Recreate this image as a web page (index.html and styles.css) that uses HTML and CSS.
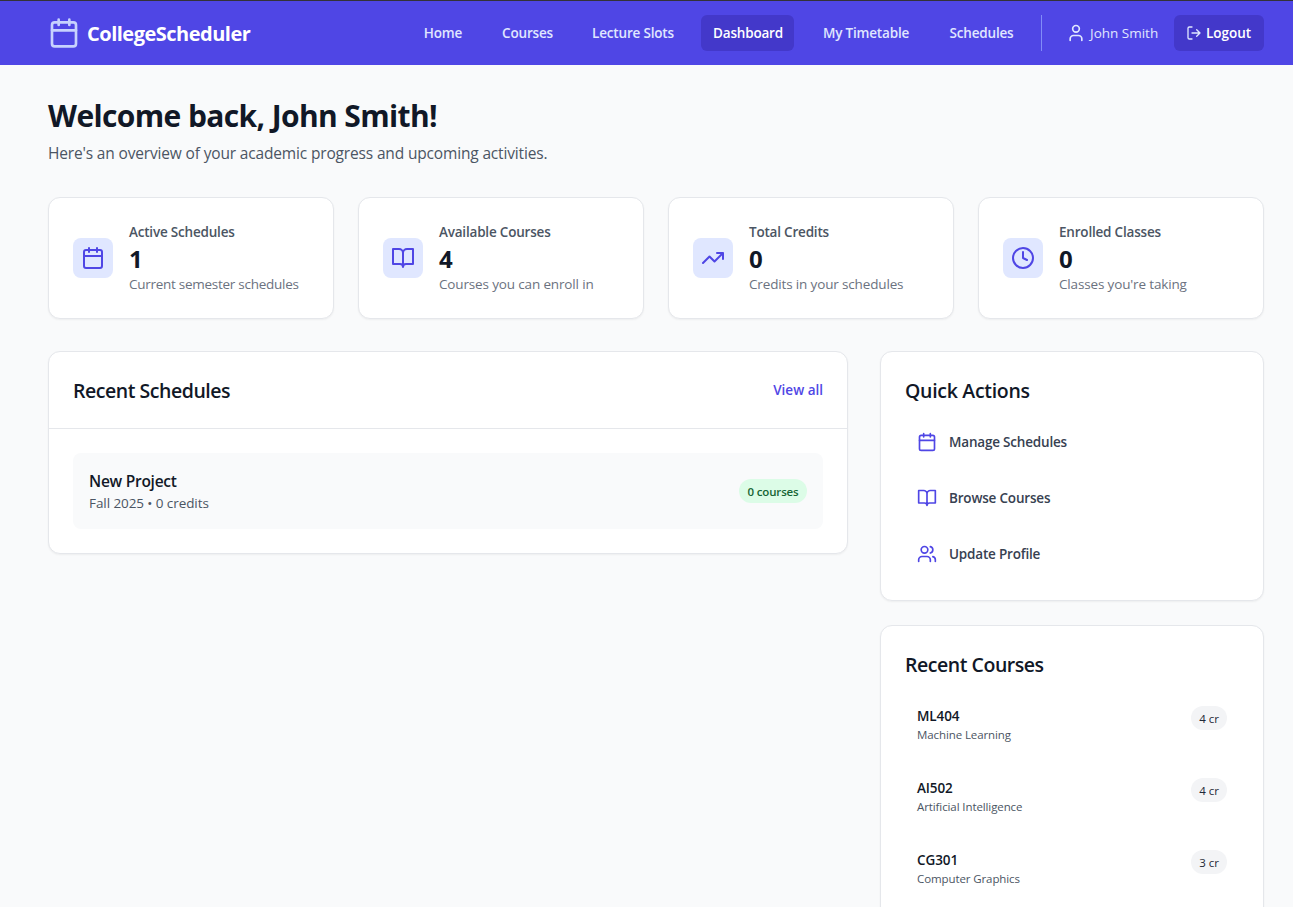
FILE: index.html
```html
<!DOCTYPE html>
<html lang="en">
<head>
<meta charset="utf-8">
<title>CollegeScheduler</title>
<link rel="stylesheet" href="styles.css">
</head>
<body>
<svg class="sprite" aria-hidden="true">
  <symbol id="calendar" viewBox="0 0 24 24"><path d="M8 2v4M16 2v4M3 10h18"/><rect x="3" y="4" width="18" height="18" rx="2"/></symbol>
  <symbol id="book" viewBox="0 0 24 24"><path d="M2 3h6a4 4 0 0 1 4 4v14a3 3 0 0 0-3-3H2zM22 3h-6a4 4 0 0 0-4 4v14a3 3 0 0 1 3-3h7z"/></symbol>
  <symbol id="trend" viewBox="0 0 24 24"><path d="M22 7l-8.5 8.5-5-5L2 17M16 7h6v6"/></symbol>
  <symbol id="clock" viewBox="0 0 24 24"><circle cx="12" cy="12" r="10"/><path d="M12 6v6l4 2"/></symbol>
  <symbol id="user" viewBox="0 0 24 24"><path d="M19 21v-2a4 4 0 0 0-4-4H9a4 4 0 0 0-4 4v2"/><circle cx="12" cy="7" r="4"/></symbol>
  <symbol id="users" viewBox="0 0 24 24"><path d="M16 21v-2a4 4 0 0 0-4-4H6a4 4 0 0 0-4 4v2M22 21v-2a4 4 0 0 0-3-3.87M16 3.13a4 4 0 0 1 0 7.75"/><circle cx="9" cy="7" r="4"/></symbol>
  <symbol id="logout" viewBox="0 0 24 24"><path d="M9 21H5a2 2 0 0 1-2-2V5a2 2 0 0 1 2-2h4M16 17l5-5-5-5M21 12H9"/></symbol>
</svg>

<header class="topbar">
  <a class="brand"><svg class="icon icon-lg"><use href="#calendar"/></svg><span class="brand-name">CollegeScheduler</span></a>
  <div class="topbar-right">
    <nav class="nav">
      <a>Home</a><a>Courses</a><a>Lecture Slots</a><a class="active">Dashboard</a><a>My Timetable</a><a>Schedules</a>
    </nav>
    <div class="account">
      <span class="user"><svg class="icon icon-md"><use href="#user"/></svg><span>John Smith</span></span>
      <button class="logout"><svg class="icon icon-sm"><use href="#logout"/></svg><span>Logout</span></button>
    </div>
  </div>
</header>

<main class="page">
  <h1 class="title">Welcome back, John Smith!</h1>
  <p class="lead">Here's an overview of your academic progress and upcoming activities.</p>

  <section class="stats">
    <div class="card stat"><span class="tile"><svg class="icon"><use href="#calendar"/></svg></span><div><p class="stat-label">Active Schedules</p><p class="stat-value">1</p><p class="stat-note">Current semester schedules</p></div></div>
    <div class="card stat"><span class="tile"><svg class="icon"><use href="#book"/></svg></span><div><p class="stat-label">Available Courses</p><p class="stat-value">4</p><p class="stat-note">Courses you can enroll in</p></div></div>
    <div class="card stat"><span class="tile"><svg class="icon"><use href="#trend"/></svg></span><div><p class="stat-label">Total Credits</p><p class="stat-value">0</p><p class="stat-note">Credits in your schedules</p></div></div>
    <div class="card stat"><span class="tile"><svg class="icon"><use href="#clock"/></svg></span><div><p class="stat-label">Enrolled Classes</p><p class="stat-value">0</p><p class="stat-note">Classes you're taking</p></div></div>
  </section>

  <div class="columns">
    <section class="card">
      <div class="card-head"><h2 class="heading">Recent Schedules</h2><a class="view-all">View all</a></div>
      <div class="card-body">
        <div class="schedule">
          <div><h3 class="schedule-name">New Project</h3><p class="schedule-meta">Fall 2025 • 0 credits</p></div>
          <span class="pill pill-green">0 courses</span>
        </div>
      </div>
    </section>

    <aside class="side">
      <section class="card panel">
        <h2 class="heading heading-wide">Quick Actions</h2>
        <div class="list">
          <a class="action"><svg class="icon icon-md"><use href="#calendar"/></svg><span>Manage Schedules</span></a>
          <a class="action"><svg class="icon icon-md"><use href="#book"/></svg><span>Browse Courses</span></a>
          <a class="action"><svg class="icon icon-md"><use href="#users"/></svg><span>Update Profile</span></a>
        </div>
      </section>
      <section class="card panel">
        <h2 class="heading">Recent Courses</h2>
        <div class="list">
          <div class="course"><div><p class="course-code">ML404</p><p class="course-name">Machine Learning</p></div><span class="pill">4 cr</span></div>
          <div class="course"><div><p class="course-code">AI502</p><p class="course-name">Artificial Intelligence</p></div><span class="pill">4 cr</span></div>
          <div class="course"><div><p class="course-code">CG301</p><p class="course-name">Computer Graphics</p></div><span class="pill">3 cr</span></div>
        </div>
      </section>
    </aside>
  </div>
</main>
</body>
</html>
```
FILE: styles.css
```css
* { box-sizing: border-box; margin: 0; padding: 0; }
html { height: 100%; overflow: hidden; }
body {
  height: 907px;
  overflow: hidden;
  background: #f9fafb;
  color: #111827;
  font-family: "Open Sans", "Noto Sans", sans-serif;
  font-size: 14px;
  line-height: 20px;
}
.sprite { display: none; }
.icon {
  width: 24px;
  height: 24px;
  flex: none;
  fill: none;
  stroke: currentColor;
  stroke-width: 2;
  stroke-linecap: round;
  stroke-linejoin: round;
}
.icon-lg { width: 32px; height: 32px; }
.icon-md { width: 20px; height: 20px; }
.icon-sm { width: 16px; height: 16px; }

.topbar {
  display: flex;
  align-items: center;
  justify-content: space-between;
  height: 65px;
  padding: 0 29px 0 48px;
  border-top: 1px solid #333238;
  background: #4f46e5;
  color: #e0e7ff;
}
.brand {
  display: flex;
  align-items: center;
  gap: 7px;
  color: #fff;
  font-size: 20px;
  font-weight: 700;
  line-height: 28px;
  letter-spacing: -0.5px;
}
.brand-name { padding-top: 2px; }
.brand .icon { color: #c7d2fe; }
.topbar-right { display: flex; align-items: center; gap: 16px; }
.nav {
  display: grid;
  grid-template-columns: 63px 74px 105px 93px 111px 88px;
  gap: 16px;
  font-size: 13.5px;
  font-weight: 600;
  letter-spacing: -0.18px;
}
.nav a {
  height: 36px;
  padding-left: 1px;
  line-height: 36px;
  border-radius: 6px;
  text-align: center;
  white-space: nowrap;
}
.nav .active { background: #4338ca; color: #fff; }
.account {
  display: flex;
  align-items: center;
  justify-content: space-between;
  width: 223px;
  height: 36px;
  padding-left: 24px;
  border-left: 1px solid #818cf8;
}
.user { display: flex; align-items: center; gap: 4px; font-size: 13.5px; }
.logout {
  display: flex;
  align-items: center;
  gap: 4px;
  width: 90px;
  height: 36px;
  padding: 0 12px;
  border: 0;
  border-radius: 6px;
  background: #4338ca;
  color: #fff;
  font: 600 13.5px/20px "Open Sans", "Noto Sans", sans-serif;
}
.logout .icon { color: #e0e7ff; }

.page { padding: 32px 29px 0 48px; }
.title { height: 36px; font-size: 30px; line-height: 38px; font-weight: 700; letter-spacing: -0.62px; }
.lead { margin-top: 8px; font-size: 15.5px; line-height: 24px; letter-spacing: -0.16px; color: #4b5563; }

.card {
  background: #fff;
  border: 1px solid #e5e7eb;
  border-radius: 12px;
  box-shadow: 0 1px 2px rgba(0, 0, 0, 0.05);
}
.stats { display: grid; grid-template-columns: repeat(4, 1fr); gap: 24px; margin-top: 32px; }
.stat { display: flex; align-items: center; gap: 16px; height: 122px; padding: 24px; white-space: nowrap; }
.tile { padding: 8px; border-radius: 8px; background: #e0e7ff; color: #4f46e5; line-height: 0; }
.stat-label { font-size: 13.5px; font-weight: 600; letter-spacing: -0.2px; color: #4b5563; }
.stat-value { height: 32px; font-size: 24px; line-height: 34px; font-weight: 700; }
.stat-note { font-size: 13.5px; letter-spacing: -0.15px; color: #6b7280; }
.stat:first-child .stat-note { letter-spacing: -0.27px; }

.columns { display: grid; grid-template-columns: 800px 384px; gap: 32px; align-items: start; margin-top: 32px; }
.heading { height: 28px; font-size: 19.5px; line-height: 30px; font-weight: 600; letter-spacing: -0.46px; }
.heading-wide { letter-spacing: -0.3px; }
.card-head {
  display: flex;
  align-items: center;
  justify-content: space-between;
  padding: 24px;
  border-bottom: 1px solid #e5e7eb;
}
.view-all { font-size: 13.5px; font-weight: 600; color: #4f46e5; }
.card-body { padding: 24px; }
.schedule {
  display: flex;
  align-items: center;
  justify-content: space-between;
  padding: 16px;
  border-radius: 8px;
  background: #f9fafb;
}
.schedule-name { font-size: 15.5px; line-height: 24px; font-weight: 600; letter-spacing: -0.26px; }
.schedule-meta { font-size: 13.5px; letter-spacing: -0.08px; color: #4b5563; }
.pill {
  height: 24px;
  padding: 0 8px;
  border-radius: 12px;
  background: #f3f4f6;
  color: #1f2937;
  font-size: 11.5px;
  line-height: 25px;
}
.pill-green {
  width: 68px;
  background: #dcfce7;
  color: #166534;
  font-weight: 600;
  letter-spacing: -0.15px;
  text-align: center;
  white-space: nowrap;
}

.side { display: grid; gap: 24px; }
.panel { padding: 24px; }
.list { display: grid; gap: 12px; margin-top: 16px; }
.action {
  display: flex;
  align-items: center;
  gap: 12px;
  height: 44px;
  padding: 12px;
  font-size: 13.5px;
  font-weight: 600;
  letter-spacing: -0.19px;
  color: #374151;
}
.action .icon { color: #4f46e5; }
.course { display: flex; align-items: flex-start; justify-content: space-between; height: 60px; padding: 12px; }
.course-code { font-size: 13.5px; font-weight: 600; letter-spacing: -0.1px; }
.course-name { font-size: 11.5px; line-height: 18px; letter-spacing: -0.1px; color: #4b5563; }
```
